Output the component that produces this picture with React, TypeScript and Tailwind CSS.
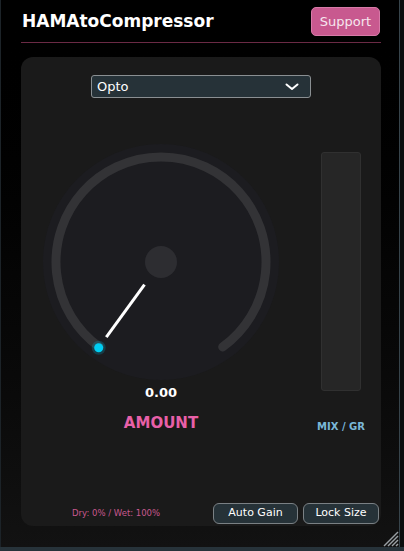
const font = { fontFamily: '"DejaVu Sans", Verdana, sans-serif' };

function Knob() {
  return (
    <svg width="240" height="240" viewBox="0 0 240 240">
      <circle cx="120" cy="120" r="118" fill="#1c1c20" />
      <path
        d="M 58.28 204.95 A 105 105 0 1 1 181.72 204.95"
        fill="none"
        stroke="#333336"
        strokeWidth="9"
        strokeLinecap="round"
      />
      <circle cx="120" cy="120" r="16" fill="#2d2d31" />
      <line x1="103.5" y1="142.7" x2="65.3" y2="195.2" stroke="#ffffff" strokeWidth="3" />
      <circle cx="57.7" cy="205.8" r="7" fill="#00c8f0" opacity="0.2" />
      <circle cx="57.7" cy="205.8" r="4.5" fill="#00cdf2" />
    </svg>
  );
}

export default function App() {
  return (
    <div className="w-[404px] h-[551px] bg-[#0d1114] flex flex-col" style={font}>
      <div className="flex h-[547px]">
        <div className="relative w-[400px] h-full border-l border-[#1c2328] border-r border-r-[#37444b] bg-gradient-to-b from-[#000000] via-[#050505] to-[#121212] pl-[20px] pr-[18px] flex flex-col">
          <div className="flex items-center justify-between pt-[7px] pb-[6px] border-b border-[#6b2a45]">
            <h1 className="text-[17px] font-bold text-white pl-[1px] pt-[1px]">HAMAtoCompressor</h1>
            <button className="h-[29px] w-[69px] rounded-[5px] bg-[#c8598f] border border-[#d77aa8] text-[13px] text-[#f6e6ee] mr-[1px]">
              Support
            </button>
          </div>

          <div className="mt-[14px] h-[469px] rounded-[12px] bg-[#1a1a1a] flex flex-col">
            <div className="flex justify-center pt-[18px]">
              <div className="w-[220px] h-[23px] rounded-[3px] border border-[#8a8f92] bg-[#263238] flex items-center justify-between pl-[5px] pr-[11px] text-[13px] text-white">
                <span>Opto</span>
                <svg width="14" height="8" viewBox="0 0 14 8">
                  <path d="M1.5 1.5 L7 6 L12.5 1.5" fill="none" stroke="#ffffff" strokeWidth="2" strokeLinecap="round" strokeLinejoin="round" />
                </svg>
              </div>
            </div>

            <div className="flex mt-[44px]">
              <div className="w-[280px] flex flex-col items-center">
                <Knob />
                <div className="mt-[3px] text-[13px] font-bold text-white leading-[16px]">0.00</div>
                <div className="mt-[12px] text-[15px] font-bold text-[#e860a8] leading-[20px]">AMOUNT</div>
              </div>
              <div className="w-[80px] flex flex-col items-center">
                <div className="mt-[10px] w-[40px] h-[239px] rounded-[3px] bg-[#262626] border border-[#303030]" />
                <div className="mt-[30px] text-[10px] font-bold text-[#7ab8d8] leading-[12px]">MIX / GR</div>
              </div>
            </div>

            <div className="mt-auto flex items-center justify-between pb-[2px] pr-[2px]">
              <span className="ml-[51px] text-[8.5px] text-[#c8588e]">Dry: 0% / Wet: 100%</span>
              <div className="flex gap-[5px]">
                <button className="w-[85px] h-[21px] rounded-[6px] bg-[#263238] border border-[#7a8084] text-[11px] text-white">
                  Auto Gain
                </button>
                <button className="w-[76px] h-[21px] rounded-[6px] bg-[#263238] border border-[#7a8084] text-[11px] text-white">
                  Lock Size
                </button>
              </div>
            </div>
          </div>

          <svg className="absolute right-[0px] bottom-[0px]" width="17" height="17" viewBox="0 0 17 17">
            <line x1="16" y1="2" x2="2" y2="16" stroke="#9aa0a4" strokeWidth="1.5" />
            <line x1="16" y1="6" x2="6" y2="16" stroke="#9aa0a4" strokeWidth="1.5" />
            <line x1="16" y1="10" x2="10" y2="16" stroke="#9aa0a4" strokeWidth="1.5" />
            <line x1="16" y1="14" x2="14" y2="16" stroke="#9aa0a4" strokeWidth="1.5" />
          </svg>
        </div>
        <div className="flex-1 bg-[#0b0d0e]" />
      </div>
      <div className="h-[4px] bg-[#27333a]" />
    </div>
  );
}
